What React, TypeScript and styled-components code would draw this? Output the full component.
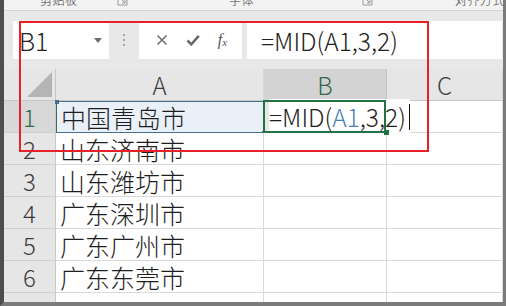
import React from 'react';
import styled, { createGlobalStyle } from 'styled-components';

const GlobalStyle = createGlobalStyle`
  html, body {
    margin: 0;
    padding: 0;
    background: #7b7b7b;
  }
  * {
    box-sizing: border-box;
  }
`;

const FONT = `"Noto Sans CJK SC", "Noto Sans", sans-serif`;

const Frame = styled.div`
  position: relative;
  width: 506px;
  height: 306px;
  overflow: hidden;
  display: flex;
  flex-direction: column;
  background: #e8e8e8;
  border-left: 4px solid #4e4e4e;
  border-right: 3px solid #7b7b7b;
  border-bottom: 4px solid #7b7b7b;
  font-family: ${FONT};
  font-weight: 300;
`;

const RibbonStrip = styled.div`
  height: 11px;
  flex-shrink: 0;
  display: flex;
  background: #f3f3f3;
  border-bottom: 1px solid #d4d4d4;
  overflow: hidden;
`;

const RibbonGroup = styled.div<{ $w?: number; $labelLeft: number }>`
  position: relative;
  width: ${(p) => (p.$w ? `${p.$w}px` : 'auto')};
  flex: ${(p) => (p.$w ? '0 0 auto' : '1')};
  display: flex;
  align-items: flex-start;
  padding-left: ${(p) => p.$labelLeft}px;
`;

const RibbonLabel = styled.span`
  font-size: 12px;
  line-height: 12px;
  margin-top: -6px;
  color: #3c3c3c;
  letter-spacing: 0.5px;
  white-space: nowrap;
`;

const Launcher = styled.svg<{ $right: number }>`
  position: absolute;
  right: ${(p) => p.$right}px;
  top: -5px;
`;

const FormulaBar = styled.div`
  display: flex;
  align-items: stretch;
  height: 38px;
  margin-top: 10px;
  padding-left: 9px;
  padding-right: 1px;
  flex-shrink: 0;
`;

const NameBox = styled.div`
  width: 96px;
  background: #fff;
  display: flex;
  align-items: center;
  justify-content: space-between;
  padding: 0 7px 0 6px;
  font-size: 25px;
  color: #222;
`;

const Grip = styled.div`
  width: 30px;
  display: flex;
  flex-direction: column;
  align-items: center;
  justify-content: center;
  gap: 3px;
  padding-right: 1px;
`;

const GripDot = styled.span`
  width: 2px;
  height: 2px;
  background: #a8a8a8;
`;

const ButtonBox = styled.div`
  width: 103px;
  background: #fff;
  display: flex;
  align-items: center;
  justify-content: space-around;
  padding: 0 6px 0 8px;
  margin-right: 5px;
`;

const Fx = styled.span`
  font-family: "Liberation Serif", serif;
  font-style: italic;
  font-size: 16px;
  color: #555;
  line-height: 1;
  & > sub {
    font-size: 11px;
    vertical-align: -1px;
  }
`;

const FormulaInput = styled.div`
  flex: 1;
  background: #fff;
  display: flex;
  align-items: center;
  padding-left: 14px;
  font-size: 24.5px;
  color: #222;
  white-space: nowrap;
`;

const Sheet = styled.div`
  margin-top: 10px;
  display: grid;
  grid-template-columns: 52px 208px 123px 1fr;
  grid-auto-rows: 32px;
  flex: 1;
`;

const ColHeader = styled.div<{ $selected?: boolean }>`
  display: flex;
  align-items: center;
  justify-content: center;
  font-size: 24px;
  color: ${(p) => (p.$selected ? '#2f6b45' : '#3c3c3c')};
  background: ${(p) => (p.$selected ? '#d3d3d3' : '#e6e6e6')};
  border-right: 1px solid ${(p) => (p.$selected ? '#c4c4c4' : '#d6d6d6')};
  border-bottom: 1px solid #c8c8c8;
`;

const Corner = styled.div`
  position: relative;
  background: #e6e6e6;
  border-right: 1px solid #c8c8c8;
  border-bottom: 1px solid #c8c8c8;
  &::after {
    content: '';
    position: absolute;
    right: 3px;
    bottom: 3px;
    width: 0;
    height: 0;
    border-left: 25px solid transparent;
    border-bottom: 25px solid #b5b5b5;
  }
`;

const RowHeader = styled.div<{ $selected?: boolean }>`
  display: flex;
  align-items: center;
  justify-content: center;
  font-size: 24px;
  color: ${(p) => (p.$selected ? '#2f6b45' : '#3c3c3c')};
  background: ${(p) => (p.$selected ? '#d8d8d8' : '#e6e6e6')};
  border-right: 1px solid #c8c8c8;
  border-bottom: 1px solid #d0d0d0;
`;

const Cell = styled.div`
  position: relative;
  display: flex;
  align-items: center;
  padding-left: 4px;
  font-size: 25px;
  color: #1e1e1e;
  background: #fff;
  white-space: nowrap;
  border-right: 1px solid #d9d9d9;
  border-bottom: 1px solid #d9d9d9;
`;

const RefCell = styled(Cell)`
  background: #eaf0f8;
  border: 1px solid #4a6e92;
  border-left-color: #3f6a5a;
  &::before,
  &::after {
    content: '';
    position: absolute;
    width: 4px;
    height: 4px;
    background: #4a6e92;
  }
  &::before {
    left: -2px;
    top: -2px;
  }
  &::after {
    right: -3px;
    bottom: -3px;
  }
`;

const EditCell = styled(Cell)`
  overflow: visible;
  z-index: 1;
  padding-left: 5px;
  background: transparent;
  &::before {
    content: '';
    position: absolute;
    inset: -1px 0 -1px -1px;
    border: 2px solid #217346;
    pointer-events: none;
  }
  &::after {
    content: '';
    position: absolute;
    right: -3px;
    bottom: -3px;
    width: 5px;
    height: 5px;
    background: #217346;
  }
`;

const EditText = styled.span`
  background: #fff;
  font-size: 24.5px;
  display: inline-flex;
  align-items: center;
`;

const RefToken = styled.span`
  color: #4a7ebb;
`;

const Caret = styled.span`
  display: inline-block;
  width: 1px;
  height: 26px;
  background: #111;
  margin-left: 3px;
`;

const Highlight = styled.div`
  position: absolute;
  left: 15px;
  top: 21px;
  width: 410px;
  height: 131px;
  border: 2px solid #e8202a;
  pointer-events: none;
  z-index: 5;
`;

const cities = ['中国青岛市', '山东济南市', '山东潍坊市', '广东深圳市', '广东广州市', '广东东莞市', ''];

const LauncherIcon = ({ right }: { right: number }) => (
  <Launcher $right={right} width="11" height="11" viewBox="0 0 11 11">
    <path d="M1 1h9v9H1z" fill="none" stroke="#9a9a9a" strokeWidth="1" />
    <path d="M4 4l4 4M5 8h3V5" fill="none" stroke="#9a9a9a" strokeWidth="1" />
  </Launcher>
);

const App: React.FC = () => {
  return (
    <>
      <GlobalStyle />
      <Frame>
        <RibbonStrip>
          <RibbonGroup $w={128} $labelLeft={36}>
            <RibbonLabel>剪贴板</RibbonLabel>
            <LauncherIcon right={4} />
          </RibbonGroup>
          <RibbonGroup $w={244} $labelLeft={97}>
            <RibbonLabel>字体</RibbonLabel>
            <LauncherIcon right={3} />
          </RibbonGroup>
          <RibbonGroup $labelLeft={79}>
            <RibbonLabel>对齐方式</RibbonLabel>
          </RibbonGroup>
        </RibbonStrip>

        <FormulaBar>
          <NameBox>
            <span>B1</span>
            <svg width="8" height="5" viewBox="0 0 8 5">
              <path d="M0 0h8L4 5z" fill="#6e6e6e" />
            </svg>
          </NameBox>
          <Grip>
            <GripDot />
            <GripDot />
            <GripDot />
          </Grip>
          <ButtonBox>
            <svg width="12" height="12" viewBox="0 0 12 12">
              <path d="M1.5 1.5l9 9M10.5 1.5l-9 9" stroke="#707070" strokeWidth="1.6" />
            </svg>
            <svg width="14" height="12" viewBox="0 0 14 12">
              <path d="M1.5 6.5l3.8 3.8L12.8 1.8" fill="none" stroke="#6a6a6a" strokeWidth="2.6" />
            </svg>
            <Fx>
              f<sub>x</sub>
            </Fx>
          </ButtonBox>
          <FormulaInput>=MID(A1,3,2)</FormulaInput>
        </FormulaBar>

        <Sheet>
          <Corner />
          <ColHeader>A</ColHeader>
          <ColHeader $selected>B</ColHeader>
          <ColHeader>C</ColHeader>

          {cities.map((city, i) => (
            <React.Fragment key={i}>
              <RowHeader $selected={i === 0}>{i < 6 ? i + 1 : ''}</RowHeader>
              {i === 0 ? (
                <>
                  <RefCell>{city}</RefCell>
                  <EditCell>
                    <EditText>
                      =MID(<RefToken>A1</RefToken>,3,2)
                      <Caret />
                    </EditText>
                  </EditCell>
                  <Cell />
                </>
              ) : (
                <>
                  <Cell>{city}</Cell>
                  <Cell />
                  <Cell />
                </>
              )}
            </React.Fragment>
          ))}
        </Sheet>

        <Highlight />
      </Frame>
    </>
  );
};

export default App;
